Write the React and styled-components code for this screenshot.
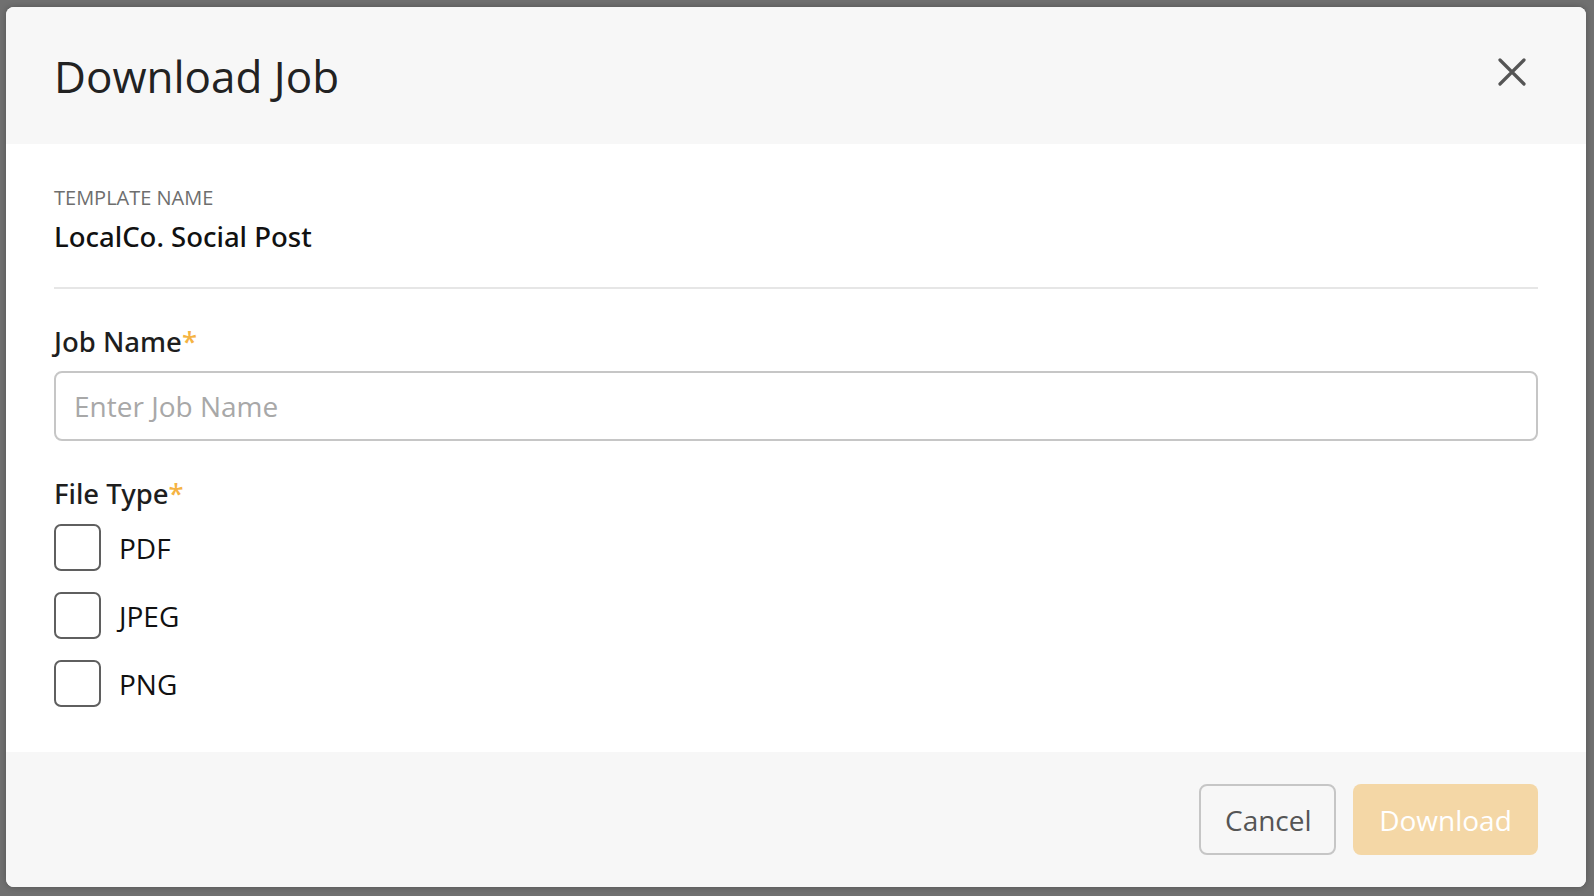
import React, { useState } from "react";
import styled, { createGlobalStyle } from "styled-components";

const GlobalStyle = createGlobalStyle`
  html, body {
    margin: 0;
    padding: 0;
    height: 100%;
  }
  body {
    font-family: "Open Sans", "Noto Sans", sans-serif;
    background: #707070;
  }
  #root {
    height: 100%;
  }
`;

const FILE_TYPES = ["PDF", "JPEG", "PNG"];

function CloseIcon() {
  return (
    <svg width="28" height="28" viewBox="0 0 28 28" fill="none">
      <path
        d="M2 2L26 26M26 2L2 26"
        stroke="#555"
        strokeWidth="3.2"
        strokeLinecap="round"
      />
    </svg>
  );
}

export default function App() {
  const [jobName, setJobName] = useState("");
  const [types, setTypes] = useState({});

  const toggle = (type) => setTypes({ ...types, [type]: !types[type] });

  return (
    <>
      <GlobalStyle />
      <Overlay>
        <Modal>
          <Header>
            <Title>Download Job</Title>
            <CloseButton aria-label="Close">
              <CloseIcon />
            </CloseButton>
          </Header>
          <Body>
            <MetaLabel>Template Name</MetaLabel>
            <MetaValue>LocalCo. Social Post</MetaValue>
            <Divider />
            <FieldLabel>
              Job Name<Required>*</Required>
            </FieldLabel>
            <TextInput
              value={jobName}
              placeholder="Enter Job Name"
              onChange={(e) => setJobName(e.target.value)}
            />
            <FieldLabel $top={34}>
              File Type<Required>*</Required>
            </FieldLabel>
            <OptionList>
              {FILE_TYPES.map((type) => (
                <Option key={type}>
                  <Checkbox
                    type="checkbox"
                    checked={!!types[type]}
                    onChange={() => toggle(type)}
                  />
                  <OptionText>{type}</OptionText>
                </Option>
              ))}
            </OptionList>
          </Body>
          <Footer>
            <CancelButton>Cancel</CancelButton>
            <DownloadButton disabled>Download</DownloadButton>
          </Footer>
        </Modal>
      </Overlay>
    </>
  );
}

const Overlay = styled.div`
  height: 100%;
  box-sizing: border-box;
  padding: 7px 8px 9px 6px;
  display: flex;
`;

const Modal = styled.div`
  flex: 1;
  display: flex;
  flex-direction: column;
  background: #fff;
  border-radius: 8px;
  overflow: hidden;
  box-shadow: 0 0 6px rgba(0, 0, 0, 0.25);
`;

const Header = styled.div`
  height: 137px;
  flex-shrink: 0;
  display: flex;
  align-items: center;
  justify-content: space-between;
  padding: 0 48px;
  background: #f7f7f7;
`;

const Title = styled.h1`
  margin: 0;
  font-size: 44px;
  font-weight: 400;
  color: #222;
  line-height: 64px;
`;

const CloseButton = styled.button`
  display: flex;
  align-items: center;
  justify-content: center;
  width: 48px;
  height: 48px;
  margin-right: 2px;
  margin-top: -8px;
  padding: 0;
  border: none;
  background: transparent;
  cursor: pointer;
`;

const Body = styled.div`
  flex: 1;
  padding: 40px 48px 45px;
  display: flex;
  flex-direction: column;
`;

const MetaLabel = styled.div`
  font-size: 20px;
  line-height: 28px;
  text-transform: uppercase;
  color: #6e6e6e;
`;

const MetaValue = styled.div`
  margin-top: 6px;
  font-family: "Noto Sans", "Open Sans", sans-serif;
  font-size: 27.5px;
  line-height: 38px;
  font-weight: 500;
  color: #111;
`;

const Divider = styled.hr`
  margin: 31px 0 0;
  border: none;
  height: 2px;
  background: #e6e6e6;
`;

const FieldLabel = styled.label`
  display: block;
  margin-top: ${(p) => p.$top ?? 34}px;
  font-family: "Noto Sans", "Open Sans", sans-serif;
  font-size: 27.5px;
  line-height: 38px;
  font-weight: 500;
  color: #1e1e1e;
`;

const Required = styled.span`
  color: #f5b342;
`;

const TextInput = styled.input`
  margin-top: 10px;
  height: 70px;
  box-sizing: border-box;
  padding: 0 18px;
  border: 2px solid #c6c6c6;
  border-radius: 8px;
  font-family: inherit;
  font-size: 28px;
  color: #222;
  outline: none;

  &::placeholder {
    color: #a8a8a8;
  }
`;

const OptionList = styled.div`
  margin-top: 11px;
  display: flex;
  flex-direction: column;
  gap: 21px;
`;

const Option = styled.label`
  display: flex;
  align-items: center;
  gap: 18px;
  cursor: pointer;
`;

const Checkbox = styled.input`
  appearance: none;
  margin: 0;
  width: 47px;
  height: 47px;
  box-sizing: border-box;
  border: 2px solid #5f5f5f;
  border-radius: 7px;
  background: #fff;
  cursor: pointer;

  &:checked {
    background: #f5b342;
    border-color: #f5b342;
  }
`;

const OptionText = styled.span`
  font-size: 28px;
  line-height: 38px;
  color: #111;
`;

const Footer = styled.div`
  height: 135px;
  flex-shrink: 0;
  display: flex;
  align-items: center;
  justify-content: flex-end;
  gap: 17px;
  padding: 0 48px;
  background: #f7f7f7;
`;

const BaseButton = styled.button`
  height: 71px;
  box-sizing: border-box;
  border-radius: 8px;
  font-family: inherit;
  font-size: 28px;
  padding: 0 24px;
  cursor: pointer;
`;

const CancelButton = styled(BaseButton)`
  width: 137px;
  border: 2px solid #c6c6c6;
  background: #f7f7f7;
  color: #555;
`;

const DownloadButton = styled(BaseButton)`
  width: 185px;
  border: none;
  background: #f4d7a6;
  color: #fff;
  cursor: default;
`;
